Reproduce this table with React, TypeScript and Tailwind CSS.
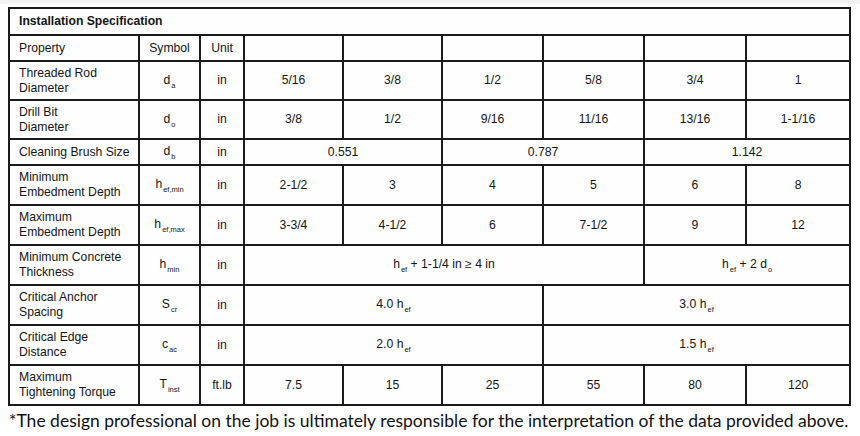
import React from "react";

const Sub = ({ base, sub }: { base: string; sub: string }) => (
  <span className="whitespace-nowrap">
    {base}
    <span className="relative top-[4px] ml-[1px] text-[7.5px]">{sub}</span>
  </span>
);

const cell = "border-2 border-[#1b1b1b] text-[12.2px] leading-[15px] text-[#151515] align-middle";
const left = `${cell} text-left pl-[9px] pr-[4px]`;
const mid = `${cell} text-center`;

export default function App() {
  const vals = (arr: (string | React.ReactNode)[]) =>
    arr.map((v, i) => (
      <td key={i} className={mid}>
        {v}
      </td>
    ));

  return (
    <div className="w-[860px] h-[436px] bg-white" style={{ fontFamily: '"Liberation Sans", Arial, sans-serif' }}>
      <div className="h-[4px] bg-[#f3f3f3]" />
      <div className="pt-[3px] pl-[8px]">
        <table className="table-fixed border-collapse w-[841px] bg-[#fefefe]">
          <colgroup>
            <col className="w-[130px]" />
            <col className="w-[61px]" />
            <col className="w-[44px]" />
            <col className="w-[99px]" />
            <col className="w-[99px]" />
            <col className="w-[101px]" />
            <col className="w-[101px]" />
            <col className="w-[102px]" />
            <col className="w-[104px]" />
          </colgroup>
          <tbody>
            <tr className="h-[27px]">
              <td colSpan={9} className={`${left} font-bold`}>Installation Specification</td>
            </tr>
            <tr className="h-[26px]">
              <td className={left}>Property</td>
              <td className={mid}>Symbol</td>
              <td className={mid}>Unit</td>
              {vals(["", "", "", "", "", ""])}
            </tr>
            <tr className="h-[39px]">
              <td className={left}>Threaded Rod<br />Diameter</td>
              <td className={mid}><Sub base="d" sub="a" /></td>
              <td className={mid}>in</td>
              {vals(["5/16", "3/8", "1/2", "5/8", "3/4", "1"])}
            </tr>
            <tr className="h-[39px]">
              <td className={left}>Drill Bit<br />Diameter</td>
              <td className={mid}><Sub base="d" sub="o" /></td>
              <td className={mid}>in</td>
              {vals(["3/8", "1/2", "9/16", "11/16", "13/16", "1-1/16"])}
            </tr>
            <tr className="h-[26px]">
              <td className={left}>Cleaning Brush Size</td>
              <td className={mid}><Sub base="d" sub="b" /></td>
              <td className={mid}>in</td>
              <td colSpan={2} className={mid}>0.551</td>
              <td colSpan={2} className={mid}>0.787</td>
              <td colSpan={2} className={mid}>1.142</td>
            </tr>
            <tr className="h-[40px]">
              <td className={left}>Minimum<br />Embedment Depth</td>
              <td className={mid}><Sub base="h" sub="ef,min" /></td>
              <td className={mid}>in</td>
              {vals(["2-1/2", "3", "4", "5", "6", "8"])}
            </tr>
            <tr className="h-[40px]">
              <td className={left}>Maximum<br />Embedment Depth</td>
              <td className={mid}><Sub base="h" sub="ef,max" /></td>
              <td className={mid}>in</td>
              {vals(["3-3/4", "4-1/2", "6", "7-1/2", "9", "12"])}
            </tr>
            <tr className="h-[40px]">
              <td className={left}>Minimum Concrete<br />Thickness</td>
              <td className={mid}><Sub base="h" sub="min" /></td>
              <td className={mid}>in</td>
              <td colSpan={4} className={mid}>
                <Sub base="h" sub="ef" /> + 1-1/4 in ≥ 4 in
              </td>
              <td colSpan={2} className={mid}>
                <Sub base="h" sub="ef" /> + 2 <Sub base="d" sub="o" />
              </td>
            </tr>
            <tr className="h-[40px]">
              <td className={left}>Critical Anchor<br />Spacing</td>
              <td className={mid}><Sub base="S" sub="cr" /></td>
              <td className={mid}>in</td>
              <td colSpan={3} className={mid}>4.0 <Sub base="h" sub="ef" /></td>
              <td colSpan={3} className={mid}>3.0 <Sub base="h" sub="ef" /></td>
            </tr>
            <tr className="h-[40px]">
              <td className={left}>Critical Edge<br />Distance</td>
              <td className={mid}><Sub base="c" sub="ac" /></td>
              <td className={mid}>in</td>
              <td colSpan={3} className={mid}>2.0 <Sub base="h" sub="ef" /></td>
              <td colSpan={3} className={mid}>1.5 <Sub base="h" sub="ef" /></td>
            </tr>
            <tr className="h-[40px]">
              <td className={left}>Maximum<br />Tightening Torque</td>
              <td className={mid}><Sub base="T" sub="inst" /></td>
              <td className={mid}>ft.lb</td>
              {vals(["7.5", "15", "25", "55", "80", "120"])}
            </tr>
          </tbody>
        </table>
        <p
          className="mt-[4px] ml-[1px] text-[17.5px] leading-[22px] text-[#111] whitespace-nowrap"
          style={{ fontFamily: 'Lato, "Noto Sans", sans-serif' }}
        >
          *The design professional on the job is ultimately responsible for the interpretation of the data provided above.
        </p>
      </div>
    </div>
  );
}
